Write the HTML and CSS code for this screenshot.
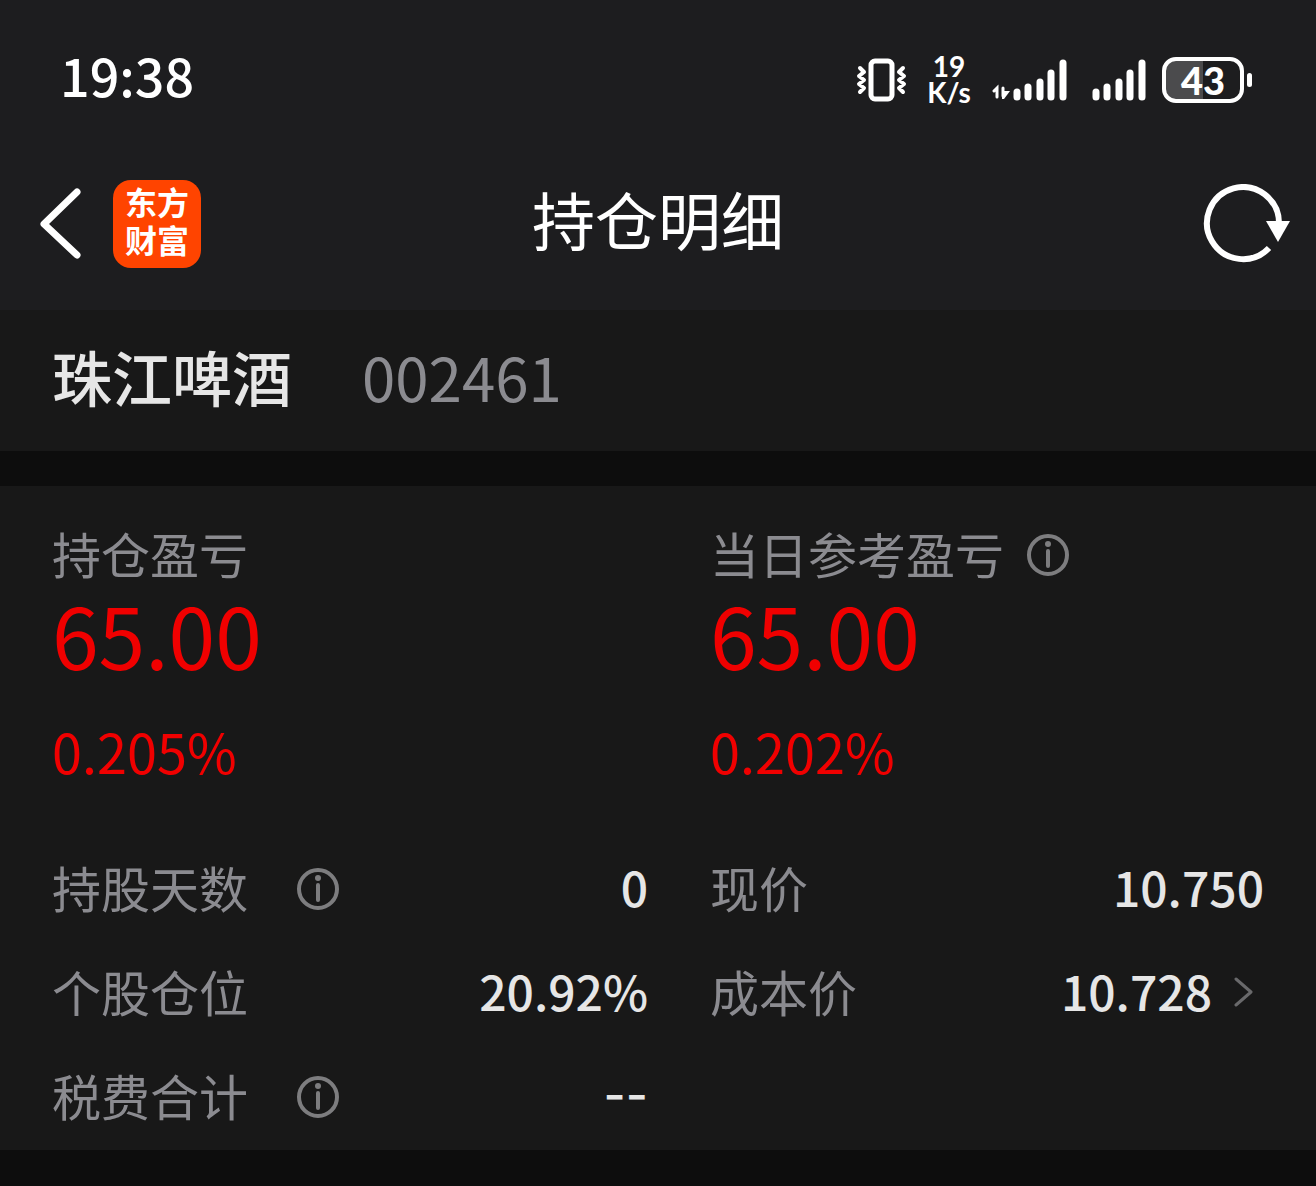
FILE: index.html
```
<!DOCTYPE html>
<html lang="zh-CN">
<head>
  <meta charset="utf-8">
  <meta name="viewport" content="width=device-width, initial-scale=1">
  <title>持仓明细</title>
  <link rel="stylesheet" href="styles.css">
</head>
<body>
  <div class="status-bar">
    <span class="time">19:38</span>
    <div class="status-icons">
      <svg class="vibrate" width="52" height="44" viewBox="0 0 52 44" fill="none" stroke="#fff" stroke-linejoin="round" stroke-linecap="round">
        <rect x="15" y="3" width="21" height="38" rx="4" stroke-width="5"/>
        <path d="M4 10l4 4-5 4 5 4-5 4 5 4-4 4M47 10l-4 4 5 4-5 4 5 4-5 4 4 4" stroke-width="4"/>
      </svg>
      <div class="speed"><span>19</span><span>K/s</span></div>
      <svg class="signal-data" width="76" height="44" viewBox="0 0 76 44" fill="none" stroke="#fff" stroke-linecap="round">
        <path d="M2 33l3-3v9M11 30v8" stroke-width="3"/>
        <path d="M10 33h8l-6 8h-2z" fill="#fff" stroke="none"/>
        <path d="M25 34v5M36 29v10M48 24v15M59 15v24M71 5v34" stroke-width="7"/>
      </svg>
      <svg class="signal" width="54" height="44" viewBox="0 0 54 44" fill="none" stroke="#fff" stroke-linecap="round" stroke-width="7">
        <path d="M4 34v5M15 29v10M27 24v15M38 15v24M50 5v34"/>
      </svg>
      <div class="battery"><span>43</span></div>
      <div class="battery-tip"></div>
    </div>
  </div>

  <header class="header">
    <div class="header-left">
      <button class="back" aria-label="返回">
        <svg width="44" height="72" viewBox="0 0 44 72" fill="none" stroke="#fff" stroke-width="7" stroke-linecap="round" stroke-linejoin="round">
          <path d="M38 4L5 36l33 31"/>
        </svg>
      </button>
      <div class="logo"><span>东方</span><span>财富</span></div>
    </div>
    <h1>持仓明细</h1>
    <button class="refresh" aria-label="刷新">
      <svg width="88" height="80" viewBox="0 0 88 80">
        <path d="M67 64A36 36 0 1 1 77 39" fill="none" stroke="#fff" stroke-width="6"/>
        <path d="M64 37h24L76 58z" fill="#fff"/>
      </svg>
    </button>
  </header>

  <section class="stock">
    <h2>珠江啤酒</h2>
    <span class="code">002461</span>
  </section>

  <main class="panel">
    <div class="column">
      <div class="label">持仓盈亏</div>
      <div class="profit">65.00</div>
      <div class="percent">0.205%</div>
      <div class="row">
        <span>持股天数</span>
        <button class="info" aria-label="持股天数说明">
          <svg width="44" height="44" viewBox="0 0 44 44" fill="none" stroke="#7d7d7f">
            <circle cx="22" cy="22" r="19" stroke-width="4"/>
            <path d="M22 18v15" stroke-width="4" stroke-linecap="round"/>
            <circle cx="22" cy="11" r="3" fill="#7d7d7f" stroke="none"/>
          </svg>
        </button>
        <span class="value">0</span>
      </div>
      <div class="row">
        <span>个股仓位</span>
        <span class="value">20.92%</span>
      </div>
      <div class="row">
        <span>税费合计</span>
        <button class="info" aria-label="税费合计说明">
          <svg width="44" height="44" viewBox="0 0 44 44" fill="none" stroke="#7d7d7f">
            <circle cx="22" cy="22" r="19" stroke-width="4"/>
            <path d="M22 18v15" stroke-width="4" stroke-linecap="round"/>
            <circle cx="22" cy="11" r="3" fill="#7d7d7f" stroke="none"/>
          </svg>
        </button>
        <span class="value empty">--</span>
      </div>
    </div>

    <div class="column">
      <div class="label">
        <span>当日参考盈亏</span>
        <button class="info" aria-label="当日参考盈亏说明">
          <svg width="44" height="44" viewBox="0 0 44 44" fill="none" stroke="#7d7d7f">
            <circle cx="22" cy="22" r="19" stroke-width="4"/>
            <path d="M22 18v15" stroke-width="4" stroke-linecap="round"/>
            <circle cx="22" cy="11" r="3" fill="#7d7d7f" stroke="none"/>
          </svg>
        </button>
      </div>
      <div class="profit">65.00</div>
      <div class="percent">0.202%</div>
      <div class="row">
        <span>现价</span>
        <span class="value">10.750</span>
      </div>
      <div class="row">
        <span>成本价</span>
        <span class="value">10.728</span>
        <button class="more" aria-label="成本价详情">
          <svg width="20" height="32" viewBox="0 0 20 32" fill="none" stroke="#69696b" stroke-width="3" stroke-linecap="round" stroke-linejoin="round">
            <path d="M2 3l15 13L2 29"/>
          </svg>
        </button>
      </div>
    </div>
  </main>
</body>
</html>
```
FILE: styles.css
```
* {
  box-sizing: border-box;
}

body {
  margin: 0;
  background: #0d0d0d;
  color: #fff;
  font-family: "Noto Sans CJK SC", sans-serif;
}

h1, h2 {
  margin: 0;
}

button {
  display: flex;
  padding: 0;
  border: 0;
  background: none;
}

.status-bar {
  display: flex;
  align-items: center;
  justify-content: space-between;
  height: 136px;
  padding: 20px 64px 0 60px;
  background: #1d1d1f;
}

.time {
  font-size: 52px;
  font-weight: 500;
  line-height: 80px;
  padding-bottom: 6px;
}

.status-icons {
  display: flex;
  align-items: center;
  padding-top: 4px;
}

.speed {
  display: flex;
  flex-direction: column;
  align-items: center;
  width: 46px;
  margin: 0 20px 2px 18px;
  font-family: Lato, sans-serif;
  font-size: 28px;
  font-weight: 700;
  line-height: 26px;
}

.signal {
  margin: 0 16px 0 24px;
}

.battery {
  display: flex;
  align-items: center;
  justify-content: center;
  width: 82px;
  height: 46px;
  border: 4px solid #fff;
  border-radius: 14px;
  background: linear-gradient(to right, #4b4b4d 50%, #1d1d1f 50%);
  font-family: Lato, sans-serif;
  font-size: 38px;
  font-weight: 900;
  line-height: 38px;
}

.battery-tip {
  width: 5px;
  height: 14px;
  margin-left: 3px;
  border-radius: 3px;
  background: #fff;
}

.header {
  display: grid;
  grid-template-columns: 1fr auto 1fr;
  align-items: center;
  height: 174px;
  padding: 2px 26px 0;
  background: #1d1d1f;
}

.header-left {
  display: flex;
  align-items: center;
  gap: 30px;
  padding-left: 13px;
}

.logo {
  display: flex;
  flex-direction: column;
  align-items: center;
  width: 88px;
  height: 88px;
  padding-top: 2px;
  border-radius: 18px;
  background: #ff4400;
  font-size: 32px;
  font-weight: 700;
  line-height: 38px;
}

.header h1 {
  font-size: 63px;
  font-weight: 400;
  line-height: 80px;
  padding-bottom: 12px;
}

.refresh {
  justify-self: end;
}

.stock {
  display: flex;
  align-items: center;
  gap: 70px;
  height: 141px;
  padding: 0 52px 10px;
  background: #181818;
  font-size: 60px;
  line-height: 80px;
}

.stock h2 {
  color: #e6e6e6;
  font-size: 60px;
  font-weight: 500;
}

.code {
  color: #8b8b90;
}

.panel {
  display: grid;
  grid-template-columns: 1fr 1fr;
  margin-top: 35px;
  padding: 32px 0 4px;
  background: #181818;
}

.column {
  padding: 0 10px 0 52px;
}

.column + .column {
  padding-right: 52px;
}

.label,
.row {
  display: flex;
  align-items: center;
  color: #8b8b90;
  font-size: 49px;
}

.label {
  gap: 22px;
  height: 68px;
}

.profit {
  color: #f00000;
  font-size: 84px;
  line-height: 96px;
}

.percent {
  color: #f00000;
  font-size: 54px;
  line-height: 138px;
  margin-bottom: 14px;
}

.row {
  height: 104px;
}

.info {
  padding-top: 6px;
}

.row .info {
  margin-left: 48px;
}

.value {
  margin-left: auto;
  color: #e6e6e6;
  font-size: 48px;
  font-weight: 500;
}

.empty {
  font-family: Inter, sans-serif;
}

.more {
  margin: 4px 10px 0 22px;
}
```
